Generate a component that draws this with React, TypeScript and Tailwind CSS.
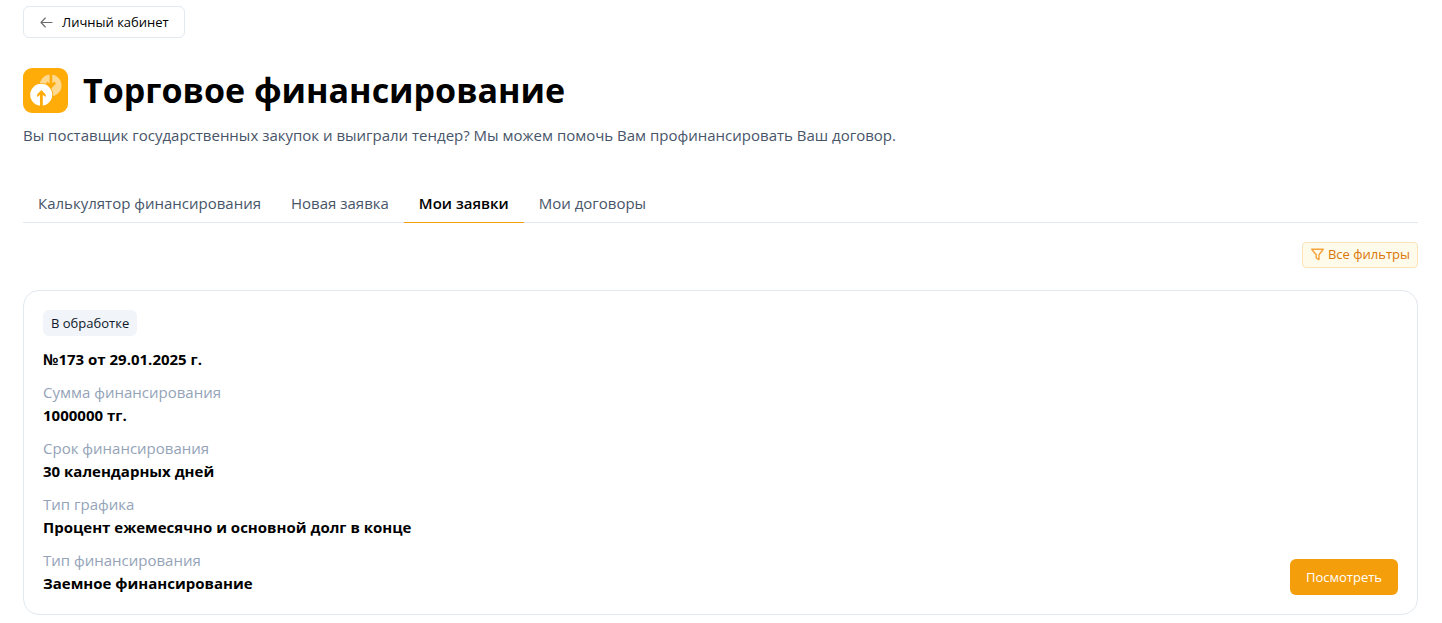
import { useState } from "react"
import clsx from "clsx"

type Application = {
    id: number,
    date: string,
    status: string,
    details: { label: string, value: string }[]
}

const tabs = ["Калькулятор финансирования", "Новая заявка", "Мои заявки", "Мои договоры"]

const applications: Application[] = [
    {
        id: 173,
        date: "29.01.2025",
        status: "В обработке",
        details: [
            { label: "Сумма финансирования", value: "1000000 тг." },
            { label: "Срок финансирования", value: "30 календарных дней" },
            { label: "Тип графика", value: "Процент ежемесячно и основной долг в конце" },
            { label: "Тип финансирования", value: "Заемное финансирование" }
        ]
    }
]

const ArrowLeftIcon = () => (
    <svg className="size-[15px]" viewBox="0 0 15 15" fill="none" stroke="#6b6b6b" strokeWidth="1.1" strokeLinecap="round" strokeLinejoin="round" aria-hidden="true">
        <path d="M13 7.5H2M6.3 3L2 7.5L6.3 12" />
    </svg>
)

const FilterIcon = () => (
    <svg className="size-[15px]" viewBox="0 0 15 15" fill="none" stroke="#f7a23b" strokeWidth="1.4" strokeLinejoin="round" aria-hidden="true">
        <path d="M1.7 2.2H13.3L9 7.8V12.6L6.2 10.8V7.8Z" />
    </svg>
)

const FinancingLogo = () => (
    <svg className="size-[45px] shrink-0" viewBox="0 0 45 45" aria-hidden="true">
        <rect width="45" height="45" rx="9" fill="#ffab08" />
        <circle cx="27.6" cy="17.4" r="10.9" fill="#ffd98f" />
        <path d="M26.6 6h2.6v9.6l2.2-2.1 1.5 2.2-5 5-5-5 1.5-2.2 2.2 2.1z" fill="#ffab08" />
        <circle cx="18.2" cy="26.8" r="11.9" fill="#ffab08" />
        <circle cx="18.2" cy="26.8" r="11" fill="#fff" />
        <path d="M18.4 22l4.3 4.6v2.5l-2.9-2.2v11.4h-2.8v-11.4l-2.9 2.2v-2.5z" fill="#ffab08" />
    </svg>
)

const ApplicationCard = ({ application }: { application: Application }) => (
    <article className="flex items-end justify-between rounded-2xl border border-[#e2e8f0] p-[19px]">
        <div>
            <span className="inline-block rounded-md bg-[#f1f5f9] px-2 py-[3px] text-[13px] leading-5 text-slate-900">
                {application.status}
            </span>
            <h2 className="mt-3 font-bold">{`№${application.id} от ${application.date} г.`}</h2>
            <dl className="mt-2.5 space-y-2.5">
                {
                    application.details.map((detail) => (
                        <div key={detail.label}>
                            <dt className="text-[#94a3b8]">{detail.label}</dt>
                            <dd className="font-bold">{detail.value}</dd>
                        </div>
                    ))
                }
            </dl>
        </div>
        <button type="button" className="h-9 rounded-md bg-[#f59e0b] px-4 text-[13px] text-white">
            Посмотреть
        </button>
    </article>
)

const App = () => {
    const [activeTab, setActiveTab] = useState("Мои заявки");

    return (
        <main className="bg-white pt-1.5 pr-6 pb-2 pl-[23px] font-['Open_Sans',sans-serif] text-[15px] leading-[23px] text-black">
            <a href="#" className="inline-flex h-8 items-center gap-2 rounded-md border border-[#e2e8f0] px-[15px] text-[13px] align-top">
                <ArrowLeftIcon />
                Личный кабинет
            </a>
            <div className="mt-[30px] flex items-center gap-[15px]">
                <FinancingLogo />
                <h1 className="text-[34px] leading-[45px] font-bold">Торговое финансирование</h1>
            </div>
            <p className="mt-[11px] text-[#475569]">
                Вы поставщик государственных закупок и выиграли тендер? Мы можем помочь Вам профинансировать Ваш договор.
            </p>
            <div role="tablist" className="mt-[38px] flex border-b border-[#e2e8f0]">
                {
                    tabs.map((tab) => (
                        <button
                            key={tab}
                            type="button"
                            role="tab"
                            aria-selected={tab === activeTab}
                            onClick={() => setActiveTab(tab)}
                            className={clsx(
                                "-mb-px border-b px-[15px] py-[7px]",
                                tab === activeTab ? "border-[#f59e0b] font-semibold" : "border-transparent text-[#475569]"
                            )}
                        >
                            {tab}
                        </button>
                    ))
                }
            </div>
            <div className="mt-[19px] flex justify-end">
                <button type="button" className="flex h-[26px] items-center gap-[3px] rounded border border-[#fbe3b5] bg-[#fffbeb] px-[7px] pb-0.5 text-[13px] text-[#d97706]">
                    <FilterIcon />
                    Все фильтры
                </button>
            </div>
            <section className="mt-[22px] flex flex-col gap-4">
                {
                    applications.map((application) => (
                        <ApplicationCard key={application.id} application={application} />
                    ))
                }
            </section>
        </main>
    )
}

export default App
